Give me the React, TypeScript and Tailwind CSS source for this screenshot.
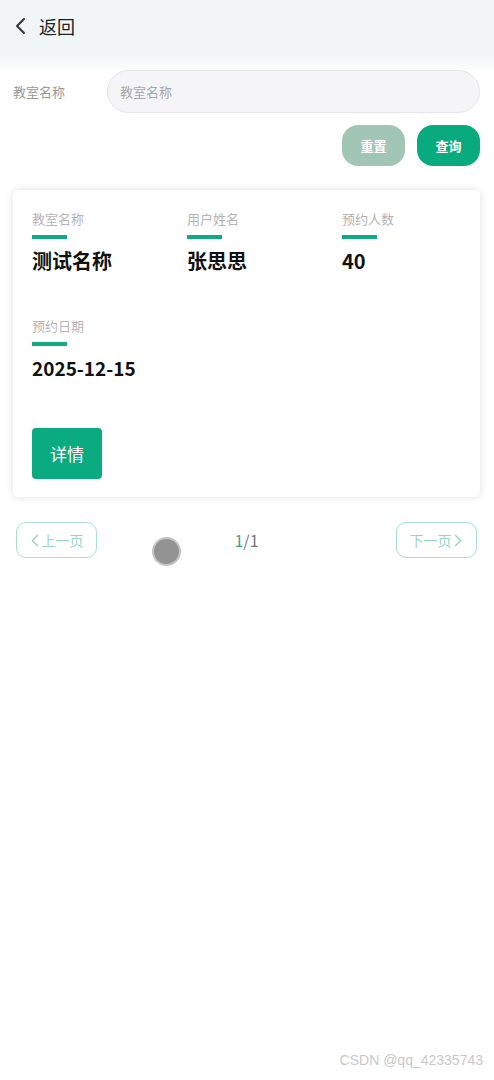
import React from 'react';

const FONT = { fontFamily: '"Noto Sans CJK SC", "Noto Sans", sans-serif' };

// One field of the booking card: grey caption, green underline, bold value
const Field = ({ label, value, size = 'text-[20px]' }) => (
  <div className="flex flex-col">
    <span className="text-[13px] leading-[18px] text-[#b5b5b5]">{label}</span>
    <span className="mt-[7px] block h-[4px] w-[35px] bg-[#12a985]" />
    <span className={`mt-[8px] ${size} leading-[28px] font-bold text-[#111]`}>{value}</span>
  </div>
);

const Chevron = ({ dir = 'left', className = '' }) => (
  <svg viewBox="0 0 12 18" className={className} fill="none" stroke="currentColor" strokeWidth="2" strokeLinecap="round" strokeLinejoin="round">
    {dir === 'left' ? <path d="M10 2 3 9l7 7" /> : <path d="M2 2l7 7-7 7" />}
  </svg>
);

export default function App() {
  return (
    <div className="relative h-[1080px] w-full bg-white" style={FONT}>
      {/* Header */}
      <div className="flex h-[52px] items-center bg-[#f0f5f5] pl-[14px]">
        <Chevron className="h-[18px] w-[12px] text-[#333]" />
        <span className="ml-[13px] text-[18px] text-[#222]">返回</span>
      </div>

      {/* Search form */}
      <div className="bg-[linear-gradient(to_bottom,#f0f5f5,#ffffff_22px)] pt-[18px]">
        <div className="flex items-center pl-[13px] pr-[14px]">
          <span className="w-[94px] text-[13px] text-[#9a9a9a]">教室名称</span>
          <input
            className="h-[43px] flex-1 rounded-full border border-[#e6e6ea] bg-[#f5f5f8] px-[12px] text-[13px] outline-none placeholder:text-[#a8a8a8]"
            placeholder="教室名称"
          />
        </div>
        <div className="mt-[12px] flex justify-end gap-[12px] pr-[14px]">
          <button className="h-[41px] w-[63px] rounded-[16px] bg-[#a2c6b5] text-[13px] font-bold text-white">重置</button>
          <button className="h-[41px] w-[63px] rounded-[16px] bg-[#0aaa7f] text-[13px] font-bold text-white">查询</button>
        </div>
      </div>

      {/* Booking card */}
      <div className="mx-[13px] mr-[14px] mt-[24px] rounded-[5px] bg-white px-[19px] pb-[18px] pt-[20px] shadow-[0_0_8px_rgba(0,0,0,0.12)]">
        <div className="grid grid-cols-3 gap-x-[36px] gap-y-[42px]">
          <Field label="教室名称" value="测试名称" />
          <Field label="用户姓名" value="张思思" />
          <Field label="预约人数" value="40" />
          <Field label="预约日期" value="2025-12-15" size="text-[19px]" />
        </div>
        <button className="mt-[46px] h-[51px] w-[70px] rounded-[4px] bg-[#0aab80] text-[17px] text-white">详情</button>
      </div>

      {/* Pagination */}
      <div className="mt-[25px] flex items-center justify-between pl-[16px] pr-[17px]">
        <button className="flex h-[36px] w-[81px] items-center justify-center rounded-[10px] border border-[#a9e0d0] text-[14px] text-[#98d5c3]">
          <Chevron className="mr-[3px] h-[13px] w-[9px]" />
          上一页
        </button>
        <span className="text-[16px] text-[#777]">
          <span className="text-[#3aa889]">1</span>/1
        </span>
        <button className="flex h-[36px] w-[81px] items-center justify-center rounded-[10px] border border-[#a9e0d0] text-[14px] text-[#98d5c3]">
          下一页
          <Chevron dir="right" className="ml-[3px] h-[13px] w-[9px]" />
        </button>
      </div>

      {/* touch indicator */}
      <div className="absolute left-[152px] top-[537px] h-[29px] w-[29px] rounded-full border-[2px] border-[#c4c4c4] bg-[#939393]" />

      <span className="absolute bottom-[9px] right-[11px] text-[14px] text-[#c9c9c9]" style={{ fontFamily: '"Liberation Sans", Arial, sans-serif' }}>
        CSDN @qq_42335743
      </span>
    </div>
  );
}
